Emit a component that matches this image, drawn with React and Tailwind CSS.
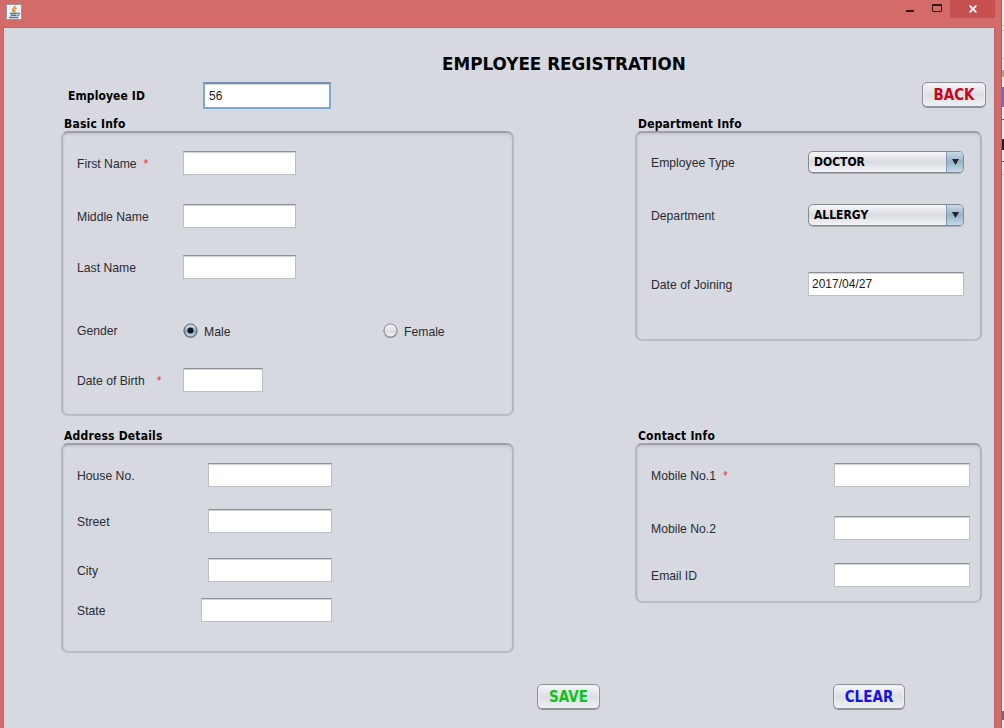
const sans = "font-['Liberation_Sans',Arial,sans-serif] text-[12.2px] leading-4 text-[#2b2b33] whitespace-nowrap";
const bold = "font-['DejaVu_Sans_Condensed','DejaVu_Sans',sans-serif] font-bold whitespace-nowrap text-black";

function JavaIcon() {
  return (
    <svg width="16" height="16" viewBox="0 0 16 16" className="block">
      <rect x="0.5" y="0.5" width="15" height="15" rx="1" fill="#f1f2f3" stroke="#8d9aa3" />
      <path d="M8.800 1.800C9.800 3.800 5.800 4.600 6.600 6.400c.4.800 1.300 1.100 1.100 2" fill="none" stroke="#e0812c" strokeWidth="1.600" />
      <path d="M10.600 4.200C8.700 5 8.200 5.700 9 6.600c.5.700.2 1.100-.4 1.600" fill="none" stroke="#e5954a" strokeWidth="1.300" />
      <path d="M4 9.500h7M4.800 11.300h5.600M3 13.500h9.500" fill="none" stroke="#4c7891" strokeWidth="1.300" />
      <path d="M11.300 9.300c2.700-.8 2.600 1.900-.2 2.300" fill="none" stroke="#4c7891" strokeWidth="1.200" />
    </svg>
  );
}

function TitleBar() {
  return (
    <div className="flex h-[27px] shrink-0 justify-between bg-[#d36c68]">
      <div className="pl-[6px] pt-[4px]"><JavaIcon /></div>
      <div className="mr-[6px] flex h-[18px]">
        <svg width="45" height="18" className="block">
          <path d="M1 11h8" stroke="#35191a" strokeWidth="2" />
          <path d="M27.500 5h9v6.500h-9z" fill="none" stroke="#35191a" />
          <path d="M27 5h10" stroke="#35191a" strokeWidth="2" />
        </svg>
        <div className="flex w-[45px] items-center justify-center bg-[#c75050]">
          <svg width="8" height="8" viewBox="0 0 8 8"><path d="M.7.7l6.600 6.600M7.300.7L.7 7.300" stroke="#fff" strokeWidth="1.700" /></svg>
        </div>
      </div>
    </div>
  );
}

function Field({ className, value }) {
  return (
    <input
      defaultValue={value}
      className={`block h-6 shrink-0 rounded-none border border-[#bcbfc6] border-t-[#8d9096] bg-white px-[3px] text-[12px] text-[#222] shadow-[inset_0_1px_0_#d2d3d5] outline-none font-['Liberation_Sans',Arial,sans-serif] ${className}`}
    />
  );
}

function Row({ label, required, gap = "", labelWidth, children }) {
  return (
    <div className={`flex h-6 shrink-0 items-center ${gap}`}>
      <div className={`flex shrink-0 pt-[2px] ${labelWidth} ${sans}`}>
        <span>{label}</span>
        {required && <span className={`text-[#e8353f] ${required}`}>*</span>}
      </div>
      {children}
    </div>
  );
}

function Panel({ title, className, children }) {
  return (
    <section className="flex flex-col">
      <h2 className={`${bold} h-[15px] pl-[3px] pt-px text-[12px] leading-[15px] tracking-[0.2px]`}>{title}</h2>
      <div className={`flex flex-col rounded-[7px] border-2 border-[#b4b7be] border-t-[#9da0a7] border-b-[#bbbec5] shadow-[inset_0_2px_2px_#c6c9d0,inset_1px_0_1px_#cbced5] ${className}`}>
        {children}
      </div>
    </section>
  );
}

function Radio({ label, checked, className = "" }) {
  return (
    <label className={`flex items-center gap-[6px] pt-[2px] ${sans} ${className}`}>
      <svg width="15" height="16" viewBox="0 0 15 16" className="block">
        <defs>
          <linearGradient id={`radio-${label}`} x2="0" y2="1">
            <stop stopColor={checked ? "#d9e5ee" : "#f7f8fa"} />
            <stop offset=".6" stopColor={checked ? "#86a6bf" : "#d9dce1"} />
            <stop offset="1" stopColor={checked ? "#cfe5f2" : "#f6f7f9"} />
          </linearGradient>
        </defs>
        <circle cx="7.500" cy="8.300" r="7" fill="#9fa4ab" />
        <circle cx="7.500" cy="7.500" r="6.500" fill={`url(#radio-${label})`} stroke={checked ? "#57687b" : "#8b8e94"} />
        {checked && <circle cx="7.500" cy="7.500" r="3" fill="#10161b" />}
      </svg>
      <span className="pt-px">{label}</span>
    </label>
  );
}

function Select({ value }) {
  return (
    <div className="flex h-[22px] w-[156px] overflow-hidden rounded-[5px] border border-[#868990] bg-linear-to-b from-[#f6f7f9] via-[#d9dce2] to-[#f2f3f6] shadow-[0_1px_0_#a8abb2]">
      <span className={`${bold} flex-1 pl-[5px] text-[12px] leading-[20px] tracking-[0px]`}>{value}</span>
      <span className="flex w-[17px] items-center justify-center border-l border-[#8298ac] bg-linear-to-b from-[#c9d9e5] via-[#98b2c8] to-[#c4dbe9]">
        <svg width="7" height="6" className="block"><path d="M0 0h7L3.500 6z" fill="#202427" /></svg>
      </span>
    </div>
  );
}

function Button({ children, className }) {
  return (
    <button className={`${bold} block h-[25px] rounded-[5px] border border-[#8e9197] bg-linear-to-b from-[#f6f7f9] via-[#dcdfe4] to-[#f0f1f4] pt-[2px] text-[15px] leading-[21px] shadow-[0_1px_0_#92959c,inset_0_0_0_1px_#eff0f3] ${className}`}>
      {children}
    </button>
  );
}

export default function App() {
  return (
    <div className="flex h-[728px] w-[1004px] overflow-hidden bg-white">
      <div className="flex w-[1002px] shrink-0 flex-col border-r border-[#b35b59] bg-[#d36c68]">
        <TitleBar />
        <main className="ml-[3px] mr-[6px] flex h-[701px] flex-col border border-b-0 border-[#b96468] bg-[#d6d9e0]">
          <h1 className="mt-[25px] h-[22px] whitespace-nowrap pl-[438px] text-[16.8px] leading-[22px] font-bold text-black font-['DejaVu_Sans',sans-serif]">EMPLOYEE REGISTRATION</h1>
          <div className="mt-[7px] flex h-7 pl-[64px]">
            <span className={`${bold} w-[135px] pt-[7px] text-[12px] leading-[15px] tracking-[0.1px]`}>Employee ID</span>
            <Field value="56" className="h-[27px]! w-[128px] border-2! border-[#7fa8d0]! border-t-[#7590ae]! px-1!" />
            <Button className="ml-[591px] w-[64px] text-[#d0021b]!">BACK</Button>
          </div>
          <div className="mt-[6px] flex h-[537px] pl-[57px]">
            <div className="flex w-[453px] flex-col">
              <Panel title="Basic Info" className="h-[285px] pl-[14px] pt-[18px]">
                <Row label="First Name" required="ml-[7px]" labelWidth="w-[106px]"><Field className="w-[113px]" /></Row>
                <Row label="Middle Name" gap="mt-[29px]" labelWidth="w-[106px]"><Field className="w-[113px]" /></Row>
                <Row label="Last Name" gap="mt-[27px]" labelWidth="w-[106px]"><Field className="w-[113px]" /></Row>
                <Row label="Gender" gap="mt-[39px]" labelWidth="w-[106px]">
                  <Radio label="Male" checked className="w-[200px]" />
                  <Radio label="Female" />
                </Row>
                <Row label="Date of Birth" required="ml-[12px]" gap="mt-[26px]" labelWidth="w-[106px]"><Field className="w-[80px]" /></Row>
              </Panel>
              <div className="h-[12px] shrink-0" />
              <Panel title="Address Details" className="h-[210px] pl-[14px] pt-[18px]">
                <Row label="House No." labelWidth="w-[131px]"><Field className="w-[124px]" /></Row>
                <Row label="Street" gap="mt-[22px]" labelWidth="w-[131px]"><Field className="w-[124px]" /></Row>
                <Row label="City" gap="mt-[25px]" labelWidth="w-[131px]"><Field className="w-[124px]" /></Row>
                <Row label="State" gap="mt-[16px]" labelWidth="w-[124px]"><Field className="w-[131px]" /></Row>
              </Panel>
            </div>
            <div className="ml-[121px] flex w-[347px] flex-col">
              <Panel title="Department Info" className="h-[210px] pl-[14px] pt-[17px]">
                <Row label="Employee Type" labelWidth="w-[157px]"><Select value="DOCTOR" /></Row>
                <Row label="Department" gap="mt-[29px]" labelWidth="w-[157px]"><Select value="ALLERGY" /></Row>
                <Row label="Date of Joining" gap="mt-[45px]" labelWidth="w-[157px]"><Field value="2017/04/27" className="w-[156px]" /></Row>
              </Panel>
              <div className="h-[87px] shrink-0" />
              <Panel title="Contact Info" className="h-[160px] pl-[14px] pt-[18px]">
                <Row label="Mobile No.1" required="ml-[7px]" labelWidth="w-[183px]"><Field className="w-[136px]" /></Row>
                <Row label="Mobile No.2" gap="mt-[29px]" labelWidth="w-[183px]"><Field className="w-[136px]" /></Row>
                <Row label="Email ID" gap="mt-[23px]" labelWidth="w-[183px]"><Field className="w-[136px]" /></Row>
              </Panel>
            </div>
          </div>
          <div className="mt-[31px] flex pl-[533px]">
            <Button className="w-[63px] text-[#10c21c]!">SAVE</Button>
            <Button className="ml-[233px] w-[72px] text-[#1414dc]!">CLEAR</Button>
          </div>
        </main>
      </div>
      <div className="flex w-[2px] flex-col bg-[#f6eeee]">
        <div className="mt-[25px] h-[6px] shrink-0 border-y border-[#c9c0c0]" />
        <div className="mt-[27px] h-px shrink-0 bg-[#c9c0c0]" />
        <div className="mt-[11px] h-[7px] shrink-0 bg-[#aaa0a0]" />
        <div className="mt-[10px] h-[20px] shrink-0 bg-[#6c70b8]" />
        <div className="mt-[12px] h-px shrink-0 bg-[#555]" />
        <div className="mt-[19px] h-[11px] shrink-0 bg-[#252020]" />
        <div className="mt-[11px] h-px shrink-0 bg-[#555]" />
        <div className="mt-[12px] h-px shrink-0 bg-[#c9c0c0]" />
        <div className="mt-[536px] h-[9px] shrink-0 bg-[#776666]" />
      </div>
    </div>
  );
}
